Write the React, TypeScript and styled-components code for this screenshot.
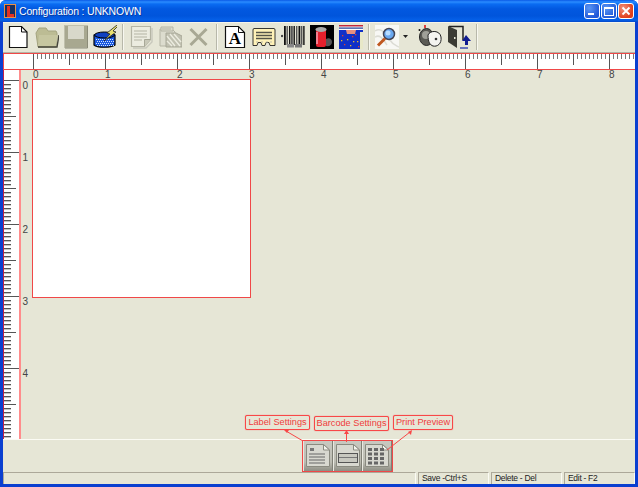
import React from "react";
import styled, { createGlobalStyle } from "styled-components";

const Global = createGlobalStyle`
  html, body { margin: 0; padding: 0; background: #fff; overflow: hidden; }
  * { box-sizing: border-box; }
`;

const Window = styled.div`
  position: relative;
  width: 638px;
  height: 487px;
  display: flex;
  flex-direction: column;
  background: #0a3fd0;
  border-radius: 6px 6px 0 0;
  overflow: hidden;
  font-family: "Liberation Sans", Arial, sans-serif;
`;
const TitleBar = styled.div`
  height: 22px;
  flex: none;
  display: flex;
  align-items: center;
  padding: 0 4px 0 4px;
  background: linear-gradient(180deg, #0a5ae6 0, #2a8cff 2px, #0a6cf2 4px, #0258e0 9px, #0055dc 16px, #0560e8 20px, #0548c8 22px);
`;
const TitleText = styled.span`
  margin-left: 3px;
  flex: 1;
  color: #fff;
  font-size: 10.5px;
  letter-spacing: -0.2px;
  white-space: nowrap;
  text-shadow: 1px 1px 0 #0a3aa0;
`;
const WinButton = styled.div<{ $close?: boolean }>`
  width: 16px;
  height: 16px;
  margin-left: 1px;
  border: 1px solid #fff;
  border-radius: 3px;
  background: ${(p) => (p.$close ? "radial-gradient(circle at 30% 30%, #f0907a, #e0401c 70%)" : "radial-gradient(circle at 30% 30%, #5a96f4, #2058d8 75%)")};
  display: flex;
  align-items: center;
  justify-content: center;
`;
const Client = styled.div`
  flex: 1;
  margin: 0 3px 3px;
  display: flex;
  flex-direction: column;
  background: #e6e6d6;
  min-height: 0;
`;
const Toolbar = styled.div`
  height: 31px;
  flex: none;
  display: flex;
  align-items: center;
  padding: 0 0 2px 3px;
  background: #e6e6d6;
  border-top: 1px solid #f4f4ea;
  border-bottom: 1px solid #b4b4a6;
`;
const Group = styled.div`
  display: flex;
  gap: 5px;
  align-items: center;
`;
const Sep = styled.div`
  width: 2px;
  height: 26px;
  margin: 0 5px;
  border-left: 1px solid #b8b8aa;
  border-right: 1px solid #f8f8f0;
`;
const Slot = styled.svg`
  width: 24px;
  height: 24px;
  flex: none;
  display: block;
`;
const Drop = styled.div`
  width: 5px;
  height: 3px;
  margin: 0 5px 0 -1px;
  background: #222;
  clip-path: polygon(0 0, 100% 0, 50% 100%);
`;
const HRulerBox = styled.div`
  height: 17px;
  flex: none;
  background: #fff;
  border-top: 1px solid #f04848;
  border-bottom: 1px solid #f04848;
  border-left: 1px solid #f04848;
`;
const RulerSvg = styled.svg`
  display: block;
`;
const Body = styled.div`
  height: 369px;
  flex: none;
  display: flex;
`;
const VRulerBox = styled.div`
  width: 18px;
  flex: none;
  background: #fff;
  border-left: 1px solid #c02048;
  border-right: 2px solid #ff8c8c;
`;
const Canvas = styled.div`
  flex: 1;
  display: flex;
  flex-direction: column;
  background: #e6e6d6;
`;
const Row = styled.div`
  flex: 1;
  display: flex;
  align-items: flex-start;
`;
const Label = styled.div`
  width: 219px;
  height: 219px;
  background: #fff;
  border: 1px solid #f04848;
`;
const Panel = styled.div`
  height: 33px;
  flex: none;
  padding-left: 299px;
  border-top: 1px solid #fbfbf4;
  background: #e6e6d6;
`;
const TabBox = styled.div`
  width: 91px;
  height: 32px;
  display: flex;
  border: 1px solid #f04848;
  background: #9a9a90;
`;
const TabButton = styled.div`
  flex: 1;
  padding: 2px 0 3px;
  display: flex;
  justify-content: center;
  background: linear-gradient(180deg, #c8c8c0 0, #bcbcb2 70%, #8e8e84 100%);
  border-left: 1px solid #e8e8e0;
  border-right: 1px solid #808076;
`;
const StatusBar = styled.div`
  height: 12px;
  flex: none;
  display: flex;
  gap: 2px;
  background: #e6e6d6;
`;
const Pane = styled.div<{ $w: number }>`
  width: ${(p) => p.$w}px;
  flex: ${(p) => (p.$w === 0 ? "1" : "none")};
  border-top: 1px solid #aca899;
  border-left: 1px solid #aca899;
  border-right: 1px solid #fbfbf4;
  padding-left: 3px;
  font-size: 8.5px;
  letter-spacing: -0.3px;
  line-height: 11px;
  color: #222;
  white-space: nowrap;
  overflow: hidden;
`;
const Callout = styled.div<{ $x: number; $y: number; $w: number }>`
  position: absolute;
  left: ${(p) => p.$x}px;
  top: ${(p) => p.$y}px;
  width: ${(p) => p.$w}px;
  height: 15px;
  border: 1px solid #f84848;
  border-radius: 2px;
  box-shadow: 0 0 1px #f84848;
  background: #e6e6d6;
  color: #f03c3c;
  font-size: 9.2px;
  line-height: 13px;
  text-align: center;
  white-space: nowrap;
`;
const ArrowLayer = styled.svg`
  position: absolute;
  left: 0;
  top: 0;
  pointer-events: none;
`;

const HRuler = () => {
  const ticks = [];
  for (let i = 0; i <= 150; i++) {
    const x = 29.5 + i * 4;
    if (x > 632) break;
    const h = i % 18 === 0 ? 15 : i % 9 === 0 ? 11 : 5;
    ticks.push(<line key={i} x1={x} x2={x} y1={0} y2={h} stroke={h > 5 ? "#555" : "#777"} />);
  }
  return <RulerSvg width={631} height={15}>{ticks}</RulerSvg>;
};
const HScale = () => (
  <RulerSvg width={614} height={9}>
    {[0, 1, 2, 3, 4, 5, 6, 7, 8].map((n) => (
      <text key={n} x={14.8 + n * 72} y={8} textAnchor="middle" fontSize={10} fontFamily="Liberation Sans" fill="#444">{n}</text>
    ))}
  </RulerSvg>
);
const VRuler = () => {
  const ticks = [];
  for (let i = 0; i <= 90; i++) {
    const y = 10.5 + i * 4;
    if (y > 369) break;
    const w = i % 18 === 0 ? 16 : i % 9 === 0 ? 12 : 7;
    ticks.push(
      <g key={i}>
        <line x1={0} x2={w} y1={y} y2={y} stroke="#555" />
        {w === 7 && <line x1={0} x2={w} y1={y + 1} y2={y + 1} stroke="#c4c4c4" />}
      </g>
    );
  }
  return <RulerSvg width={15} height={369}>{ticks}</RulerSvg>;
};
const VScale = () => (
  <RulerSvg width={11} height={360}>
    {[0, 1, 2, 3, 4].map((n) => (
      <text key={n} x={1.5} y={10 + n * 72} fontSize={10} fontFamily="Liberation Sans" fill="#444">{n}</text>
    ))}
  </RulerSvg>
);

const Icon = ({ children }: { children: React.ReactNode }) => <Slot viewBox="0 0 24 24">{children}</Slot>;

const NewIcon = () => (
  <Icon>
    <path d="M3.5 1.5h12l5.5 5.500v15.500h-17.500z" fill="#fff" stroke="#111" strokeWidth="1.2" />
    <path d="M15.5 1.5v5.500h5.500" fill="none" stroke="#111" />
  </Icon>
);
const OpenIcon = () => (
  <Icon>
    <path d="M1 8l3-5h7l2 3h8l1 2v4l-1 10H3z" fill="#bcbc94" stroke="#a4a480" />
    <path d="M4 10h19l-2 11H3z" fill="#c6c6a0" />
    <path d="M24 10l-2 12H3" fill="none" stroke="#44443a" strokeWidth="1.4" />
  </Icon>
);
const SaveIcon = () => (
  <Icon>
    <rect x="0.5" y="0.5" width="23" height="22" fill="#a8a890" stroke="#c0c0ac" />
    <rect x="4" y="1" width="16" height="13" fill="#d8d8ca" />
    <path d="M23.5 1v22H1" fill="none" stroke="#8c8c78" />
  </Icon>
);
const dots = (x0: number, y0: number, w: number, h: number, c: string) => {
  const out = [];
  for (let y = 0; y < h; y += 2) for (let x = (y / 2) % 2; x < w; x += 2) out.push(<rect key={`${x}-${y}`} x={x0 + x} y={y0 + y} width={1} height={1} fill={c} />);
  return out;
};
const PaintIcon = () => (
  <Icon>
    <path d="M1 10c4-2 18-2 21 0v10c-4 3-18 3-21 0z" fill="#1a58e0" stroke="#000" strokeWidth="1.2" />
    <ellipse cx="11.500" cy="10" rx="10" ry="3" fill="#1040c0" stroke="#000" />
    {dots(3, 14, 18, 8, "#cfe4ff")}
    <path d="M24 0l-10 8 3 1-6 7 12-9-3-1 5-5z" fill="#e8e070" stroke="#222" strokeWidth="0.8" />
  </Icon>
);
const GrayDocIcon = () => (
  <Icon>
    <path d="M2.5 1.5h19v13l-6 7h-13z" fill="#ecece0" stroke="#b4b4a4" strokeWidth="1.2" />
    <path d="M5 6h13M5 9h13M5 12h13M5 15h8" stroke="#b4b4a4" strokeWidth="1.2" />
    <path d="M15.5 21.5v-7h6" fill="#c8c8b8" stroke="#a8a898" />
    <path d="M23 3v14l-6 6H4" fill="none" stroke="#c8c8bc" strokeWidth="1.4" />
  </Icon>
);
const GrayCopyIcon = () => (
  <Icon>
    <path d="M2 4h12l3 3v14H2z" fill="#dcdcce" stroke="#b4b4a4" />
    <path d="M3 2h12v4H3zM4 4h9" fill="#dcdcce" stroke="#b4b4a4" />
    <path d="M8 8h10l6 3v11H8z" fill="#c0c0b0" stroke="#a8a898" />
    <path d="M9 11l8 10M12 9l10 12M16 9l7 8M9 16l5 5" stroke="#ecece0" strokeWidth="1.4" />
  </Icon>
);
const GrayXIcon = () => (
  <Icon>
    <path d="M3.5 4l16 16M19.5 4l-16 16" stroke="#a8a894" strokeWidth="3" />
  </Icon>
);
const FontIcon = () => (
  <Icon>
    <path d="M2.5 1.5h13l6 6v15h-19z" fill="#fff" stroke="#111" strokeWidth="1.2" />
    <path d="M15.5 1.5v6h6" fill="none" stroke="#111" />
    <text x="12" y="19" textAnchor="middle" fontFamily="Liberation Serif" fontSize="17" fontWeight="700" fill="#000">A</text>
  </Icon>
);
const TicketIcon = () => (
  <Icon>
    <path d="M2 3.500h20q1 0 1 1.500v15.500h-5l-1-3h-3l-1 3h-3l-1-3H6l-1 3H1V5q0-1.500 1-1.500z" fill="#fff2b8" stroke="#222" strokeWidth="0.9" />
    <path d="M4 7.500h16M4 10.500h16M4 13.500h16" stroke="#55554a" strokeWidth="1.4" />
    <path d="M4 17h2M9 17h2M14 17h2M18 17h2" stroke="#bba" />
  </Icon>
);
const BarcodeIcon = () => (
  <Icon>
    <circle cx="1" cy="11" r="1.200" fill="#444" />
    {[3, 5.500, 8, 10, 12.500, 15, 17.500, 20, 22.200].map((x, i) => (
      <rect key={x} x={x} y="1" width={i % 3 === 0 ? 1.800 : 1.400} height="19" fill={i % 2 ? "#555" : "#111"} />
    ))}
    <rect x="6" y="19" width="7" height="3.500" fill="#888" />
    <rect x="14" y="19" width="7" height="3.500" fill="#777" />
  </Icon>
);
const CanIcon = () => (
  <Icon>
    <rect width="24" height="24" fill="#000" />
    <rect x="6" y="4" width="10" height="18" rx="2" fill="#e4202c" />
    <ellipse cx="11" cy="4.500" rx="5.500" ry="2.500" fill="#aaa" />
    <rect x="6" y="7" width="2" height="12" fill="#f08090" />
    <path d="M16 14c3-2 6 0 6 3s-3 5-6 4z" fill="#555" />
  </Icon>
);
const PictureIcon = () => (
  <Icon>
    <rect width="24" height="24" fill="#fff" />
    <rect y="0" width="24" height="1.500" fill="#c02838" />
    <rect y="2.500" width="24" height="1.200" fill="#1a3a90" />
    <rect y="5" width="24" height="19" fill="#1030c8" />
    <rect x="21" y="7" width="3" height="17" fill="#e8e8c8" />
    <path d="M7 5h10l-1 4H8z" fill="#e89080" />
    {[[3, 10], [8, 14], [13, 11], [18, 16], [5, 19], [11, 20], [16, 9], [2, 15], [19, 21], [14, 16]].map(([x, y], i) => (
      <rect key={i} x={x} y={y} width="1.300" height="1.300" fill={i % 2 ? "#e8b830" : "#e04030"} />
    ))}
  </Icon>
);
const MagnifierIcon = () => (
  <Icon>
    <rect width="24" height="24" fill="#f8f8f4" />
    <path d="M0 6c6-4 10 2 14 8s6 6 10 8M0 12c5-3 8 2 12 8" fill="none" stroke="#dcdcd4" strokeWidth="1.500" />
    <circle cx="14" cy="9" r="5.500" fill="#6aa8f0" stroke="#445" strokeWidth="1.500" />
    <circle cx="13" cy="8" r="2.500" fill="#b8dcff" />
    <path d="M10 13.500l-7 7" stroke="#c05820" strokeWidth="3" />
  </Icon>
);
const KnobIcon = () => (
  <Icon>
    <circle cx="1.500" cy="5" r="1" fill="#111" />
    <rect x="6" y="0" width="2" height="3" fill="#e04040" />
    <ellipse cx="8.500" cy="12" rx="7" ry="8.500" fill="#5a5a54" stroke="#222" />
    <circle cx="8" cy="10" r="4" fill="#a0a098" />
    <path d="M10 10c2-5 12-5 13 2s-4 10-8 9c-3-1-5-4-5-11z" fill="#f4f4f0" stroke="#222" />
    <circle cx="18" cy="14" r="1.300" fill="#333" />
  </Icon>
);
const DoorIcon = () => (
  <Icon>
    <path d="M2 1.500h14V15" fill="none" stroke="#222" strokeWidth="1.500" />
    <path d="M1 1l9 4v18l-9-6z" fill="#3c3c34" />
    <rect x="7" y="12" width="1.500" height="2" fill="#e6e6d6" />
    <path d="M19 10l5 6h-3v4h-3v-4h-3z" fill="#101c90" />
    <path d="M13 23h8" stroke="#3040b0" strokeWidth="1.400" />
  </Icon>
);

const TabIcon = ({ children }: { children: React.ReactNode }) => (
  <svg width="26" height="25" viewBox="0 0 26 25">
    <path d="M1.500 1.500h17l6 5.500v16.500h-23z" fill="#d8d8d0" stroke="#8a8a80" />
    <path d="M18.500 1.500l6 5.500h-6z" fill="#f4f4ee" stroke="#8a8a80" />
    {children}
  </svg>
);

export default function App() {
  return (
    <Window>
      <Global />
      <TitleBar>
        <svg width="12" height="14" viewBox="0 0 12 14">
          <rect width="12" height="14" fill="#e89048" />
          <rect x="1" y="1" width="10" height="12" fill="#183060" />
          <path d="M3 2h3v8h4v3H3z" fill="#e83020" />
        </svg>
        <TitleText>Configuration : UNKNOWN</TitleText>
        <WinButton>
          <svg width="14" height="14"><rect x="3" y="9" width="6" height="2" fill="#fff" /></svg>
        </WinButton>
        <WinButton>
          <svg width="14" height="14"><rect x="2.500" y="3.500" width="9" height="8" fill="none" stroke="#fff" /><rect x="2" y="3" width="10" height="2" fill="#fff" /></svg>
        </WinButton>
        <WinButton $close>
          <svg width="14" height="14"><path d="M3.500 3.500l7 7M10.500 3.500l-7 7" stroke="#fff" strokeWidth="1.800" /></svg>
        </WinButton>
      </TitleBar>
      <Client>
        <Toolbar>
          <Group><NewIcon /><OpenIcon /><SaveIcon /><PaintIcon /></Group>
          <Sep />
          <Group><GrayDocIcon /><GrayCopyIcon /><GrayXIcon /></Group>
          <Sep />
          <Group><FontIcon /><TicketIcon /><BarcodeIcon /><CanIcon /><PictureIcon /></Group>
          <Sep />
          <Group><MagnifierIcon /><Drop /><KnobIcon /><DoorIcon /></Group>
          <Sep />
        </Toolbar>
        <HRulerBox><HRuler /></HRulerBox>
        <Body>
          <VRulerBox><VRuler /></VRulerBox>
          <Canvas>
            <HScale />
            <Row>
              <VScale />
              <Label />
            </Row>
          </Canvas>
        </Body>
        <Panel>
          <TabBox>
            <TabButton>
              <TabIcon>
                <rect x="5" y="5" width="4" height="3" fill="#777" />
                <path d="M4 11h16M4 14h16M4 17h16M4 20h16" stroke="#666" />
              </TabIcon>
            </TabButton>
            <TabButton>
              <TabIcon>
                <rect x="3.500" y="10.500" width="19" height="9" fill="#c8c8c0" stroke="#555" />
                <path d="M4 14.500h18" stroke="#777" />
              </TabIcon>
            </TabButton>
            <TabButton>
              <TabIcon>
                {[0, 1, 2, 3].map((r) => [0, 1, 2].map((c) => (
                  <rect key={`${r}${c}`} x={4 + c * 6} y={5 + r * 4.5} width="4" height="3" fill="#666" />
                )))}
              </TabIcon>
            </TabButton>
          </TabBox>
        </Panel>
        <StatusBar>
          <Pane $w={0} />
          <Pane $w={71}>Save -Ctrl+S</Pane>
          <Pane $w={71}>Delete - Del</Pane>
          <Pane $w={71}>Edit - F2</Pane>
        </StatusBar>
      </Client>
      <ArrowLayer width={638} height={487}>
        <g stroke="#f84848" fill="none" strokeWidth="1">
          <path d="M303 441L286 431" />
          <path d="M346.500 442V433" />
          <path d="M387 450L410 432" />
        </g>
        <g fill="#f84848">
          <path d="M284 430l5 0-2 3z" />
          <path d="M346.500 430l2.500 4h-5z" />
          <path d="M412 430l-1 5-3-3z" />
        </g>
      </ArrowLayer>
      <Callout $x={245} $y={415} $w={65}>Label Settings</Callout>
      <Callout $x={314} $y={416} $w={75}>Barcode Settings</Callout>
      <Callout $x={393} $y={415} $w={60}>Print Preview</Callout>
    </Window>
  );
}
